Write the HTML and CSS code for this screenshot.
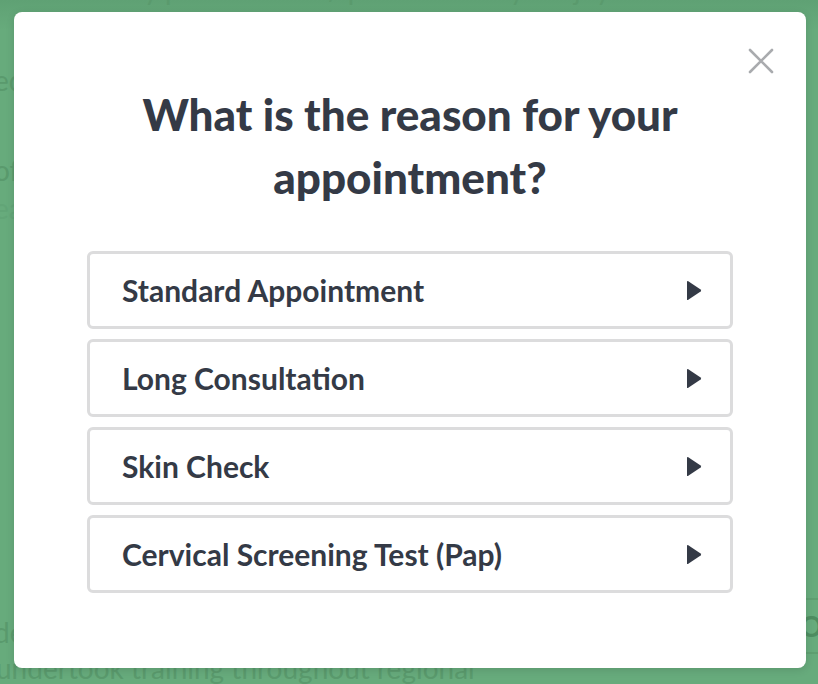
FILE: index.html
```html
<!DOCTYPE html>
<html lang="en">
<head>
  <meta charset="UTF-8" />
  <title>Book an appointment</title>
  <link rel="stylesheet" href="styles.css">
</head>
<body>
  <div class="page">
    <p class="bg-line top">Our friendly practitioners / patients always enjoy</p>
    <p class="bg-line l1">ed</p>
    <p class="bg-line l2">of</p>
    <p class="bg-line l3 faint">ea</p>
    <p class="bg-line l4">de</p>
    <p class="bg-line l5">undertook training throughout regional</p>
    <div class="bg-card">O</div>
  </div>

  <div class="overlay">
    <div class="modal">
      <button class="close-btn" aria-label="Close">
        <svg width="26" height="26" viewBox="0 0 26 26">
          <path d="M2 2 L24 24 M24 2 L2 24" stroke="#a9abae" stroke-width="2.6" stroke-linecap="round" fill="none"/>
        </svg>
      </button>

      <h1>What is the reason for your appointment?</h1>

      <div class="options">
        <button class="option">
          <span>Standard Appointment</span>
          <svg class="arrow" width="16" height="21" viewBox="0 0 16 21"><path d="M1 1.8 Q1 0.4 2.3 1.2 L14.6 9.6 Q15.6 10.5 14.6 11.4 L2.3 19.8 Q1 20.6 1 19.2 Z" fill="#343a46"/></svg>
        </button>
        <button class="option">
          <span>Long Consultation</span>
          <svg class="arrow" width="16" height="21" viewBox="0 0 16 21"><path d="M1 1.8 Q1 0.4 2.3 1.2 L14.6 9.6 Q15.6 10.5 14.6 11.4 L2.3 19.8 Q1 20.6 1 19.2 Z" fill="#343a46"/></svg>
        </button>
        <button class="option">
          <span>Skin Check</span>
          <svg class="arrow" width="16" height="21" viewBox="0 0 16 21"><path d="M1 1.8 Q1 0.4 2.3 1.2 L14.6 9.6 Q15.6 10.5 14.6 11.4 L2.3 19.8 Q1 20.6 1 19.2 Z" fill="#343a46"/></svg>
        </button>
        <button class="option">
          <span>Cervical Screening Test (Pap)</span>
          <svg class="arrow" width="16" height="21" viewBox="0 0 16 21"><path d="M1 1.8 Q1 0.4 2.3 1.2 L14.6 9.6 Q15.6 10.5 14.6 11.4 L2.3 19.8 Q1 20.6 1 19.2 Z" fill="#343a46"/></svg>
        </button>
      </div>
    </div>
  </div>
</body>
</html>
```

FILE: styles.css
```css
html, body {
  margin: 0;
  height: 100%;
  overflow: hidden;
}
body {
  font-family: Lato, "Liberation Sans", sans-serif;
  background: linear-gradient(#5fa174, #67ab7c 30px);
}
.page {
  position: relative;
  height: 684px;
  color: #5a9a6d;
}
.bg-line {
  position: absolute;
  margin: 0;
  font-size: 28px;
  line-height: 1;
  white-space: nowrap;
}
.bg-line.top { top: -25px; left: 10px; }
.bg-line.l1 { top: 66px; left: -6px; }
.bg-line.l2 { top: 156px; left: -6px; }
.bg-line.l3 { top: 194px; left: -6px; color: #62a577; }
.bg-line.l4 { top: 618px; left: -6px; }
.bg-line.l5 { top: 654px; left: -4px; }
.bg-card {
  position: absolute;
  left: 790px;
  top: 598px;
  width: 60px;
  height: 52px;
  border-top: 2px solid #5f9f71;
  border-bottom: 2px solid #5f9f71;
  font-size: 28px;
  font-weight: bold;
  line-height: 52px;
  padding-left: 10px;
  color: #4e8d61;
}

.overlay {
  position: absolute;
  top: 0;
  left: 0;
  right: 0;
  bottom: 0;
}
.modal {
  position: absolute;
  top: 12px;
  left: 14px;
  width: 792px;
  height: 656px;
  box-sizing: border-box;
  background: white;
  border-radius: 8px;
  padding: 71px 73px 0;
  box-shadow: 0 2px 8px rgba(0, 0, 0, 0.12);
}
.close-btn {
  position: absolute;
  top: 36px;
  right: 32px;
  padding: 0;
  border: none;
  background: none;
  cursor: pointer;
}
.close-btn svg {
  display: block;
}
h1 {
  margin: 0 0 42px;
  text-align: center;
  font-size: 44px;
  line-height: 63px;
  font-weight: 900;
  color: #343a46;
}
.options {
  display: flex;
  flex-direction: column;
  gap: 10px;
}
.option {
  display: flex;
  align-items: center;
  justify-content: space-between;
  height: 78px;
  padding: 0 28px 0 32px;
  background: white;
  border: 3px solid #dcdcdd;
  border-radius: 6px;
  font-family: Lato, "Liberation Sans", sans-serif;
  font-size: 30px;
  font-weight: bold;
  color: #343a46;
  cursor: pointer;
  text-align: left;
}
.arrow {
  display: block;
}
```
